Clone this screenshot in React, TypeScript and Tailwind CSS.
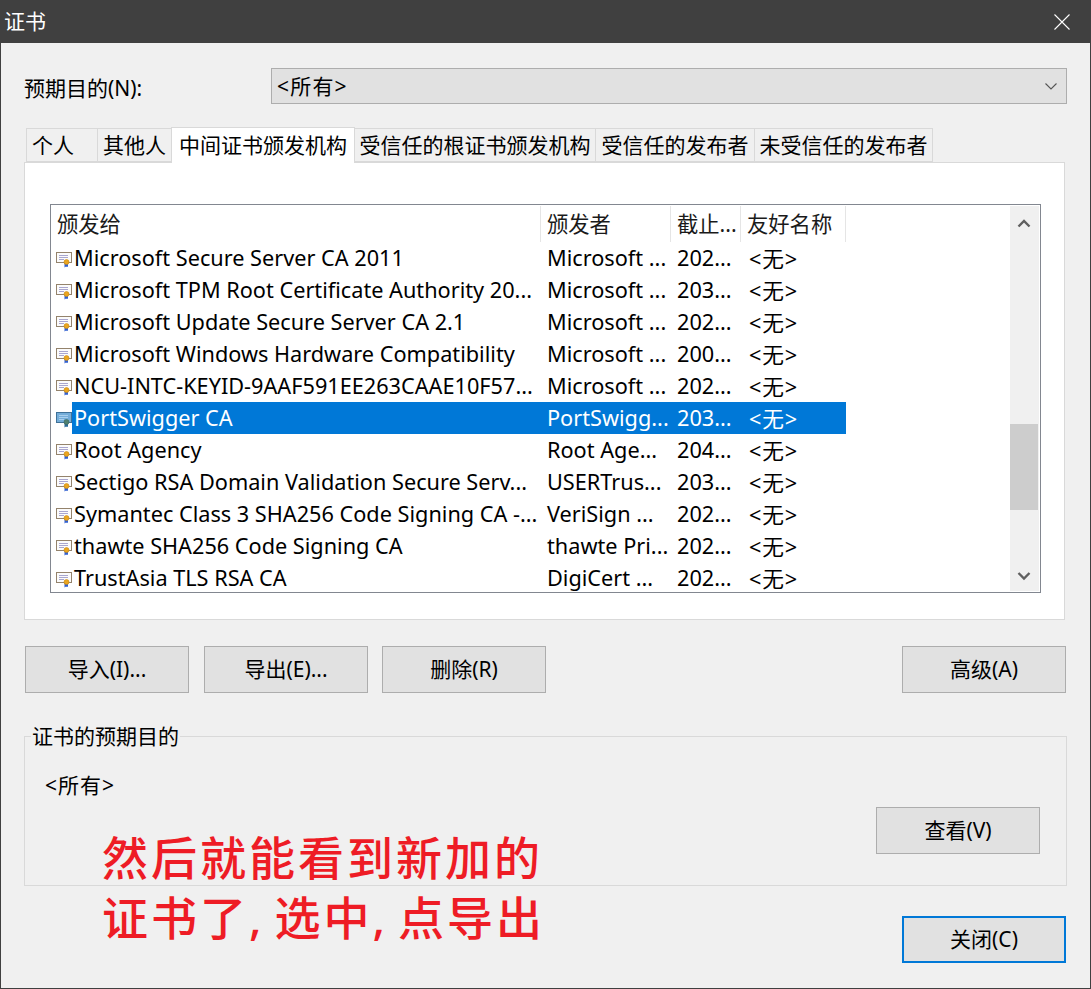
const font = { fontFamily: '"Noto Sans", "Noto Sans CJK SC", sans-serif' };

const rows = [
  ["Microsoft Secure Server CA 2011", "Microsoft ...", "202..."],
  ["Microsoft TPM Root Certificate Authority 20...", "Microsoft ...", "203..."],
  ["Microsoft Update Secure Server CA 2.1", "Microsoft ...", "202..."],
  ["Microsoft Windows Hardware Compatibility", "Microsoft ...", "200..."],
  ["NCU-INTC-KEYID-9AAF591EE263CAAE10F57...", "Microsoft ...", "202..."],
  ["PortSwigger CA", "PortSwigg...", "203..."],
  ["Root Agency", "Root Age...", "204..."],
  ["Sectigo RSA Domain Validation Secure Serv...", "USERTrus...", "203..."],
  ["Symantec Class 3 SHA256 Code Signing CA -...", "VeriSign ...", "202..."],
  ["thawte SHA256 Code Signing CA", "thawte Pri...", "202..."],
  ["TrustAsia TLS RSA CA", "DigiCert ...", "202..."],
];

const tabs = ["个人", "其他人", "中间证书颁发机构", "受信任的根证书颁发机构", "受信任的发布者", "未受信任的发布者"];
const tabWidths = ["w-[72px] pr-[18px] pt-[2px]", "w-[75px] pt-[2px]", "w-[184px]", "w-[242px] pt-[2px]", "w-[160px] pt-[2px]", "w-[179px] pt-[2px]"];

function CertIcon({ selected }: { selected: boolean }) {
  return (
    <svg width="16" height="16" viewBox="0 0 16 16" className="shrink-0">
      <rect x="0.5" y="0.5" width="15" height="10" fill={selected ? "#74add9" : "#fbfbfb"} stroke={selected ? "#3f7198" : "#94836c"} />
      <path d="M3 3.5h9M3 5.5h9M3 7.5h5" stroke={selected ? "#a9cfee" : "#a9a6cf"} strokeWidth="1" />
      <path d="M8.5 11v4.5l1.5-1 1 .5 1-.5v-3.5z" fill={selected ? "#2a6a9a" : "#2f5fd0"} />
      <circle cx="10.5" cy="10" r="2.5" fill={selected ? "#4f7f70" : "#eaa520"} stroke={selected ? "#3d6a5c" : "#c98a10"} strokeWidth="0.6" />
    </svg>
  );
}

function Btn({ label, focus = false }: { label: string; focus?: boolean }) {
  return (
    <div
      className={`flex h-[47px] w-[164px] items-center justify-center bg-[#e1e1e1] text-[21px] text-black ${
        focus ? "border-2 border-[#0078d7]" : "border border-[#adadad]"
      }`}
    >
      {label}
    </div>
  );
}

function HeadCell({ label, w }: { label: string; w: string }) {
  return (
    <div className={`${w} h-full shrink-0 border-r border-[#e5e5e5] pl-[6px] text-[21.3px] leading-[35px] text-[#1a1a1a]`}>
      {label}
    </div>
  );
}

function Row({ row, selected }: { row: string[]; selected: boolean }) {
  return (
    <div className="flex h-[32px] items-center text-[21.7px] whitespace-nowrap text-black">
      <div className="flex w-[490px] shrink-0 items-center">
        <div className="ml-[5px] mt-[4px] w-[16px] shrink-0">
          <CertIcon selected={selected} />
        </div>
        <div className={`flex h-[32px] flex-1 items-center ${selected ? "bg-[#0078d7] text-white" : ""}`}>
          <span className="ml-[2px]">{row[0]}</span>
        </div>
      </div>
      <div className={`flex h-[32px] w-[305px] shrink-0 items-center ${selected ? "bg-[#0078d7] text-white" : ""}`}>
        <span className="ml-[6px] w-[130px]">{row[1]}</span>
        <span className="w-[72px]">{row[2]}</span>
        <span className="mt-[2px] tracking-[0.8px]">&lt;无&gt;</span>
      </div>
    </div>
  );
}

export default function App() {
  return (
    <div style={font} className="relative flex h-[989px] w-[1091px] flex-col overflow-hidden border border-[#404040] bg-[#f0f0f0] text-black">
      <div className="flex h-[42px] shrink-0 items-center justify-between bg-[#404040] pl-[3px] pr-[20px] text-white">
        <span className="text-[21px]">证书</span>
        <svg width="16" height="16" viewBox="0 0 16 16" stroke="#ffffff" strokeWidth="1.1" fill="none">
          <path d="M0.5 0.5l15 15M15.5 0.5l-15 15" />
        </svg>
      </div>

      <div className="mt-[25px] flex h-[36px] items-center pl-[23px]">
        <span className="mt-[6px] w-[247px] text-[21px]">预期目的(N):</span>
        <div className="flex h-[36px] w-[796px] items-center justify-between border border-[#adadad] bg-[#e1e1e1] pl-[5px] pr-[9px] text-[21px]">
          <span className="mt-[2px] tracking-[1.2px]">&lt;所有&gt;</span>
          <svg width="12" height="7" viewBox="0 0 12 7" fill="none" stroke="#555555" strokeWidth="1.1">
            <path d="M0.5 0.5l5.5 5.5 5.5-5.5" />
          </svg>
        </div>
      </div>

      <div className="mt-[23px] flex h-[35px] items-end pl-[25px]">
        {tabs.map((t, i) => (
          <div
            key={t}
            className={`${tabWidths[i]} -ml-[1px] flex items-center justify-center whitespace-nowrap border border-[#d9d9d9] text-[21px] first:ml-0 ${
              i === 2 ? "relative z-10 -mb-[1px] h-[36px] border-b-0 bg-white" : "h-[34px] bg-[#f0f0f0]"
            }`}
          >
            {t}
          </div>
        ))}
      </div>

      <div className="ml-[23px] h-[458px] w-[1041px] border border-[#d9d9d9] bg-white pl-[25px] pt-[41px]">
        <div className="flex h-[389px] w-[991px] border border-[#828790]">
          <div className="min-w-0 flex-1 overflow-hidden">
            <div className="flex h-[37px] pt-[1px]">
              <HeadCell label="颁发给" w="w-[490px]" />
              <HeadCell label="颁发者" w="w-[130px]" />
              <HeadCell label="截止..." w="w-[70px]" />
              <HeadCell label="友好名称" w="w-[105px]" />
            </div>
            {rows.map((r, i) => (
              <Row key={r[0]} row={r} selected={i === 5} />
            ))}
          </div>
          <div className="relative my-[1px] mr-[1px] flex w-[29px] shrink-0 flex-col justify-between bg-[#f0f0f0]">
            <svg width="28" height="36" viewBox="0 0 28 36" fill="none" stroke="#606060" strokeWidth="2.4">
              <path d="M8.5 20.5l5.5-5.5 5.5 5.5" />
            </svg>
            <div className="absolute left-0 top-[218px] h-[86px] w-[28px] bg-[#cdcdcd]" />
            <svg width="28" height="36" viewBox="0 0 28 36" fill="none" stroke="#606060" strokeWidth="2.4">
              <path d="M8.5 18l5.5 5.5 5.5-5.5" />
            </svg>
          </div>
        </div>
      </div>

      <div className="ml-[24px] mt-[26px] flex h-[47px] w-[1041px]">
        <Btn label="导入(I)..." />
        <div className="ml-[15px]">
          <Btn label="导出(E)..." />
        </div>
        <div className="ml-[14px]">
          <Btn label="删除(R)" />
        </div>
        <div className="flex-1" />
        <Btn label="高级(A)" />
      </div>

      <div className="relative ml-[23px] mt-[43px] h-[150px] w-[1043px] border border-[#d9d9d9]">
        <span className="absolute -top-[15px] left-[6px] bg-[#f0f0f0] px-px text-[21px] leading-[28px]">证书的预期目的</span>
        <div className="flex h-full items-start justify-between pl-[20px] pr-[26px]">
          <span className="mt-[34px] text-[21px] leading-[28px] tracking-[1px]">&lt;所有&gt;</span>
          <div className="mt-[70px]">
            <Btn label="查看(V)" />
          </div>
        </div>
      </div>

      <div className="ml-[901px] mt-[30px]">
        <Btn label="关闭(C)" focus />
      </div>

      <div className="absolute left-[101px] top-[826px] text-[46px] leading-[60px] font-medium tracking-[3px] whitespace-nowrap text-[#ee1c25]">
        <div>然后就能看到新加的</div>
        <div>
          证书了<span className="tracking-[0.5px]">, </span>选中<span className="tracking-[0.5px]">, </span>点导出
        </div>
      </div>
    </div>
  );
}
